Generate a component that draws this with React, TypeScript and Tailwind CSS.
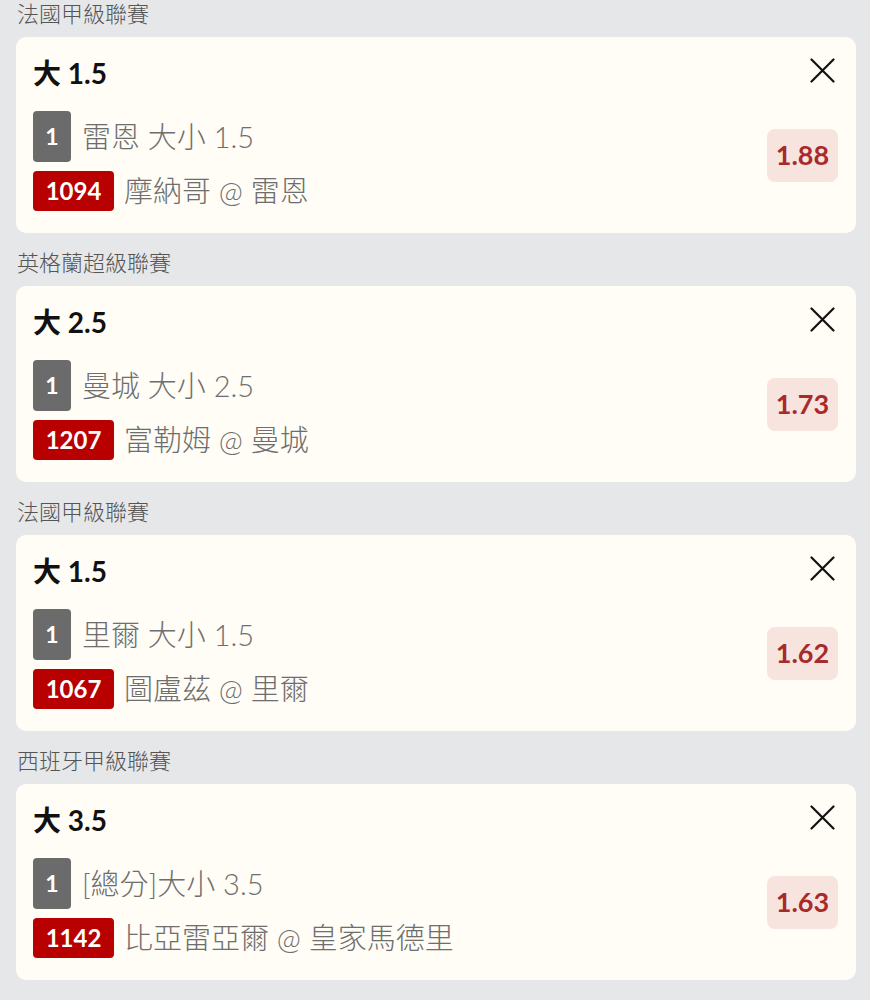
const BETS = [
  { league: "法國甲級聯賽", title: "大 1.5", market: "雷恩 大小 1.5", code: "1094", match: "摩納哥 @ 雷恩", odds: "1.88" },
  { league: "英格蘭超級聯賽", title: "大 2.5", market: "曼城 大小 2.5", code: "1207", match: "富勒姆 @ 曼城", odds: "1.73" },
  { league: "法國甲級聯賽", title: "大 1.5", market: "里爾 大小 1.5", code: "1067", match: "圖盧茲 @ 里爾", odds: "1.62" },
  { league: "西班牙甲級聯賽", title: "大 3.5", market: "[總分]大小 3.5", code: "1142", match: "比亞雷亞爾 @ 皇家馬德里", odds: "1.63" },
];

const FONT = { fontFamily: "Lato, 'Noto Sans CJK TC', sans-serif" };

function CloseIcon() {
  return (
    <svg width="25" height="25" viewBox="0 0 25 25" fill="none">
      <path d="M1.5 1.5L23.5 23.5M23.5 1.5L1.5 23.5" stroke="#111" strokeWidth="2.2" strokeLinecap="round" />
    </svg>
  );
}

export default function App() {
  return (
    <div className="min-h-[1000px] w-[870px] bg-[#e6e7e9] pl-4 pr-[14px]" style={FONT}>
      {BETS.map((bet, i) => (
        <section key={i} className={i === 0 ? "" : "mt-4"}>
          {/* League name */}
          <div className="h-[28px] pl-[1px] text-[22px] leading-[28px] font-light text-[#555]">{bet.league}</div>

          {/* Bet card */}
          <div className="mt-[9px] flex h-[196px] rounded-[10px] bg-[#fffdf6]">
            <div className="flex-1 pl-[17px] pt-[20px]">
              <div className="h-[32px] text-[28px] font-bold leading-[32px] text-[#111]">{bet.title}</div>
              <div className="mt-[22px] flex items-center gap-[11px]">
                <span className="flex h-[51px] w-[38px] items-center justify-center rounded-[4px] bg-[#6b6b6b] text-[23px] font-bold text-white">
                  1
                </span>
                <span className="text-[29px] font-light text-[#6e6e6e]">{bet.market}</span>
              </div>
              <div className="mt-[7px] flex items-center gap-[10px]">
                <span className="flex h-[40px] w-[81px] items-center justify-center rounded-[4px] bg-[#b80000] text-[24px] font-bold text-white">
                  {bet.code}
                </span>
                <span className="text-[29px] font-light text-[#6e6e6e]">{bet.match}</span>
              </div>
            </div>

            <div className="flex flex-col items-end pr-[18px] pt-[21px]">
              <div className="mr-[3px]">
                <CloseIcon />
              </div>
              <div className="mt-[46px] flex h-[53px] w-[71px] items-center justify-center rounded-[8px] bg-[#f7e4de] text-[27px] font-bold text-[#a82a2a]">
                {bet.odds}
              </div>
            </div>
          </div>
        </section>
      ))}
    </div>
  );
}
